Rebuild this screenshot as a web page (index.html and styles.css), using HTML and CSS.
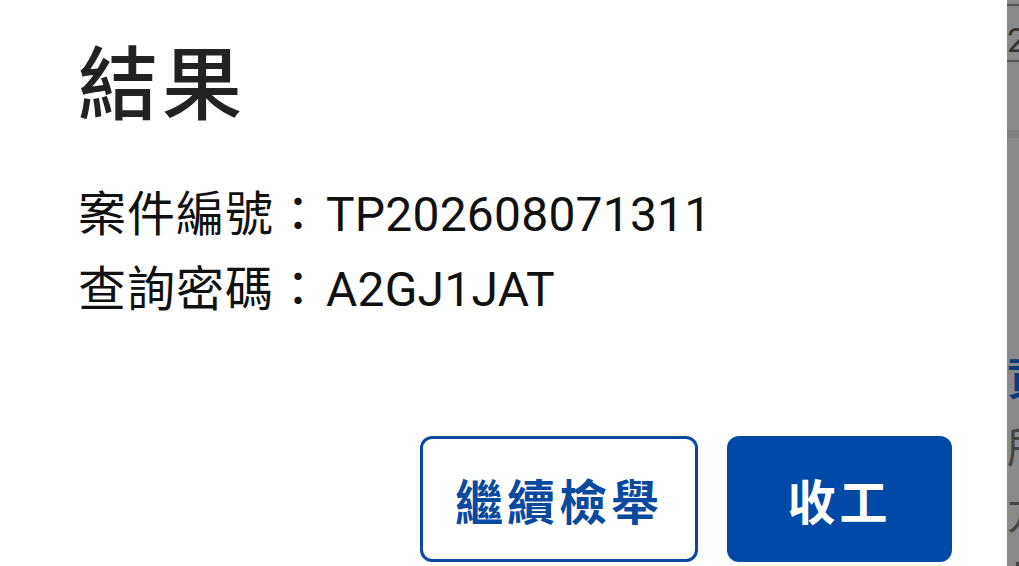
FILE: index.html
```html
<!DOCTYPE html>
<html lang="zh-Hant">
<head>
<meta charset="utf-8">
<title>結果</title>
<link rel="stylesheet" href="styles.css">
</head>
<body>
<div class="screen">
  <section class="dialog">
    <h1 class="title">結果</h1>
    <div class="info">
      <p class="row"><span class="label">案件編號：</span>TP202608071311</p>
      <p class="row"><span class="label">查詢密碼：</span>A2GJ1JAT</p>
    </div>
    <div class="actions">
      <button class="btn btn-outline">繼續檢舉</button>
      <button class="btn btn-solid">收工</button>
    </div>
  </section>
  <aside class="behind">
    <div class="bh-top"><span class="bh-num">2</span></div>
    <div class="bh-band"></div>
    <div class="bh-body">
      <span class="bh-link">資</span>
      <span class="bh-text">所</span>
      <span class="bh-text bh-small">方</span>
      <span class="bh-text">片</span>
    </div>
  </aside>
</div>
</body>
</html>
```
FILE: styles.css
```css
* { box-sizing: border-box; }
html, body { margin: 0; padding: 0; background: #8a8a8a; }
body {
  width: 1019px;
  height: 566px;
  overflow: hidden;
  font-family: Roboto, "Noto Sans CJK TC", sans-serif;
}
.screen {
  display: flex;
  height: 566px;
}
.dialog {
  width: 1007px;
  flex: none;
  background: #ffffff;
  padding: 38px 55px 0 78px;
  display: flex;
  flex-direction: column;
}
.title {
  margin: 0;
  font-family: "Noto Sans CJK TC", sans-serif;
  font-size: 80px;
  line-height: 80px;
  font-weight: 500;
  color: #222222;
  letter-spacing: 4px;
}
.info {
  margin-top: 59px;
}
.row {
  margin: 0;
  font-size: 48px;
  line-height: 75px;
  color: #111111;
  letter-spacing: 0.2px;
  white-space: nowrap;
}
.label {
  letter-spacing: 1px;
  margin-right: 3px;
}
.actions {
  margin-top: 109px;
  display: flex;
  justify-content: flex-end;
  gap: 29px;
}
.btn {
  height: 126px;
  border-radius: 12px;
  font-family: "Noto Sans CJK TC", sans-serif;
  font-size: 48px;
  font-weight: 700;
  letter-spacing: 4px;
  line-height: 1;
  display: flex;
  align-items: center;
  justify-content: center;
  cursor: pointer;
}
.btn-outline {
  width: 278px;
  background: #ffffff;
  color: #0a4a9e;
  border: 3px solid #0a4a9e;
}
.btn-solid {
  width: 225px;
  background: #0049a6;
  color: #ffffff;
  border: none;
}
.behind {
  flex: 1;
  overflow: hidden;
  background: #8a8a8a;
  display: flex;
  flex-direction: column;
}
.behind > * { flex: none; }
.bh-top {
  height: 58px;
  border-top: 2px solid #555555;
  margin-top: 4px;
  border-bottom: 2px solid #555555;
  display: flex;
  align-items: center;
  padding-top: 14px;
}
.bh-num {
  font-family: Roboto, sans-serif;
  font-size: 34px;
  color: #333333;
  line-height: 1;
}
.bh-band {
  height: 76px;
  border-bottom: 8px solid #808080;
}
.bh-body {
  display: flex;
  flex-direction: column;
  padding-top: 204px;
  font-family: "Noto Sans CJK TC", sans-serif;
  font-size: 44px;
  line-height: 68px;
}
.bh-link { color: #0b3a7e; font-weight: 700; }
.bh-text { color: #454545; }
.bh-small { font-size: 40px; }
```
